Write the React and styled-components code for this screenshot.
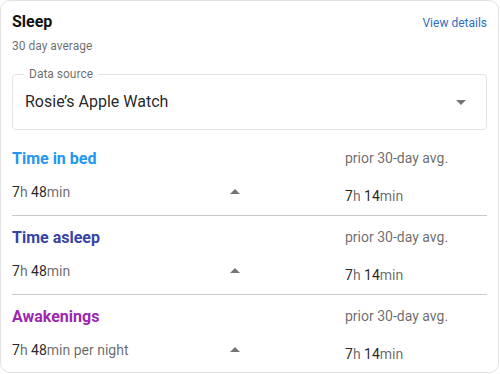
import React from "react";
import styled, { createGlobalStyle } from "styled-components";

const Global = createGlobalStyle`
  html, body { margin: 0; padding: 0; background: #fff; }
  body { font-family: Roboto, "Liberation Sans", Arial, sans-serif; }
`;

const Card = styled.div`
  box-sizing: border-box;
  width: 499px;
  height: 373px;
  border: 1px solid #e3e3e3;
  border-radius: 10px;
  padding: 0 11px;
  display: flex;
  flex-direction: column;
  overflow: hidden;
  & > * { flex-shrink: 0; }
`;

const Header = styled.div`
  display: flex;
  justify-content: space-between;
  align-items: flex-start;
  padding-top: 10px;
`;

const Title = styled.div`
  font-size: 16px;
  font-weight: 700;
  line-height: 22px;
  color: #111;
`;

const Subtitle = styled.div`
  font-size: 12px;
  line-height: 16px;
  color: rgba(0, 0, 0, 0.6);
  margin-top: 5px;
`;

const Link = styled.a`
  font-size: 12px;
  line-height: 18px;
  margin-top: 3px;
  color: #2f6fbd;
  text-decoration: none;
`;

const Select = styled.div`
  position: relative;
  margin-top: 20px;
  height: 56px;
  box-sizing: border-box;
  border: 1px solid #e3e3e3;
  border-radius: 4px;
  display: flex;
  align-items: center;
  justify-content: space-between;
  padding: 0 13px 0 12px;
`;

const SelectLabel = styled.span`
  position: absolute;
  left: 11px;
  top: -9px;
  padding: 0 5px;
  background: #fff;
  font-size: 12px;
  line-height: 16px;
  color: rgba(0, 0, 0, 0.6);
`;

const SelectValue = styled.span`
  font-size: 16px;
  color: rgba(0, 0, 0, 0.87);
  line-height: 24px;
`;

const Section = styled.div`
  display: grid;
  grid-template-columns: 1fr 142px;
  padding-top: ${(p) => (p.$first ? "17px" : "10px")};
  padding-bottom: 11px;
  border-bottom: ${(p) => (p.$last ? "none" : "1px solid #c9c9c9")};
`;

const MetricTitle = styled.div`
  font-size: 16px;
  font-weight: 700;
  line-height: 24px;
  color: ${(p) => p.$color};
`;

const Prior = styled.div`
  font-size: 14px;
  line-height: 22px;
  color: rgba(0, 0, 0, 0.6);
`;

const ValueCell = styled.div`
  display: flex;
  align-items: center;
  justify-content: space-between;
  padding-right: 98px;
  margin-top: 9px;
  height: 24px;
`;

const Value = styled.div`
  font-size: 14px;
  line-height: 20px;
  color: rgba(0, 0, 0, 0.6);
  margin-top: ${(p) => (p.$right ? "15px" : "0")};
  margin-bottom: ${(p) => (p.$right ? "-2px" : "0")};
  b {
    font-weight: 400;
    color: rgba(0, 0, 0, 0.87);
  }
`;

const Arrow = ({ up }) => (
  <svg width="24" height="24" viewBox="0 0 24 24" fill="#757575">
    {up ? <path d="M7 14l5-5 5 5z" /> : <path d="M7 10l5 5 5-5z" />}
  </svg>
);

const metrics = [
  { title: "Time in bed", color: "#2196f3", unit: "min" },
  { title: "Time asleep", color: "#3544a6", unit: "min" },
  { title: "Awakenings", color: "#9c27b0", unit: "min per night" },
];

export default function App() {
  return (
    <>
      <Global />
      <Card>
        <Header>
          <div>
            <Title>Sleep</Title>
            <Subtitle>30 day average</Subtitle>
          </div>
          <Link href="#">View details</Link>
        </Header>
        <Select>
          <SelectLabel>Data source</SelectLabel>
          <SelectValue>Rosie’s Apple Watch</SelectValue>
          <Arrow />
        </Select>
        {metrics.map((m, i) => (
          <Section key={m.title} $first={i === 0} $last={i === metrics.length - 1}>
            <MetricTitle $color={m.color}>{m.title}</MetricTitle>
            <Prior>prior 30-day avg.</Prior>
            <ValueCell>
              <Value>
                <b>7</b>h <b>48</b>{m.unit}
              </Value>
              <Arrow up />
            </ValueCell>
            <Value $right>
              <b>7</b>h <b>14</b>min
            </Value>
          </Section>
        ))}
      </Card>
    </>
  );
}
